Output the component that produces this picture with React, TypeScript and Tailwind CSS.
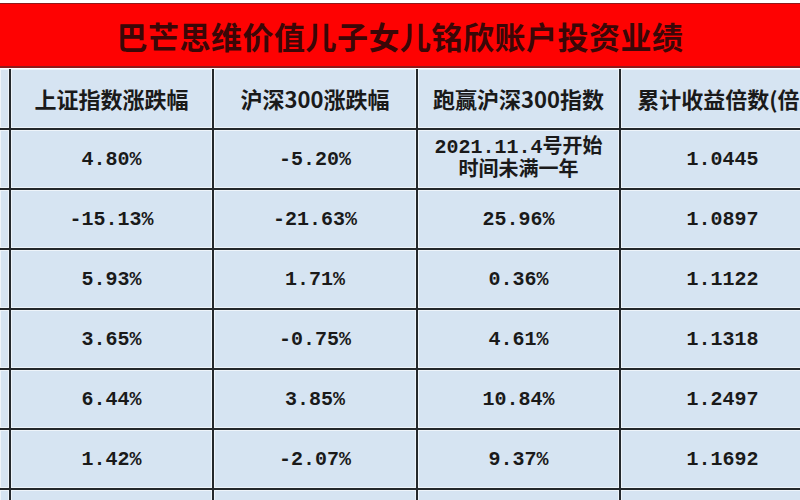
import { Fragment } from "react";

const headers = ["", "上证指数涨跌幅", "沪深300涨跌幅", "跑赢沪深300指数", "累计收益倍数(倍)"];

const rows: (string | string[])[][] = [
  ["4.80%", "-5.20%", ["2021.11.4号开始", "时间未满一年"], "1.0445"],
  ["-15.13%", "-21.63%", "25.96%", "1.0897"],
  ["5.93%", "1.71%", "0.36%", "1.1122"],
  ["3.65%", "-0.75%", "4.61%", "1.1318"],
  ["6.44%", "3.85%", "10.84%", "1.2497"],
  ["1.42%", "-2.07%", "9.37%", "1.1692"],
  ["", "", "", ""],
];

const cell =
  "flex flex-col items-center justify-center overflow-hidden whitespace-nowrap bg-[#d6e4f2] shadow-[inset_0_0_0_1px_#eef4fa] text-[#1a1a1a]";

export default function App() {
  return (
    <div className="w-[800px] h-[500px] overflow-hidden bg-white pt-[3px]">
      <div className="h-[65px] border-t border-b-2 border-[#8e1b1b] bg-[#fe0202] flex items-center justify-center pt-[8px]">
        <h1 className="text-[31px] font-bold tracking-[0.5px] text-[#3a0707] font-['Liberation_Serif','Noto_Sans_CJK_SC',serif]">
          巴芒思维价值儿子女儿铭欣账户投资业绩
        </h1>
      </div>
      {/* last column runs past the window edge, as in the screenshot */}
      <div className="mt-px w-[824px] grid grid-cols-[9px_201px_202px_201px_203px] grid-rows-[59px_repeat(7,58px)] gap-[2px] bg-[#24282c]">
        {headers.map((h, i) => (
          <div key={i} className={`${cell} text-[22px] font-bold font-['Noto_Sans_CJK_SC',sans-serif]`}>
            {h}
          </div>
        ))}
        {rows.map((r, ri) => (
          <Fragment key={ri}>
            <div className={cell} />
            {r.map((v, ci) => (
              <div
                key={ci}
                className={`${cell} text-[20px] leading-[23px] font-bold font-['Liberation_Mono','Noto_Sans_CJK_SC',monospace]`}
              >
                {Array.isArray(v) ? v.map((line) => <span key={line}>{line}</span>) : v}
              </div>
            ))}
          </Fragment>
        ))}
      </div>
    </div>
  );
}
